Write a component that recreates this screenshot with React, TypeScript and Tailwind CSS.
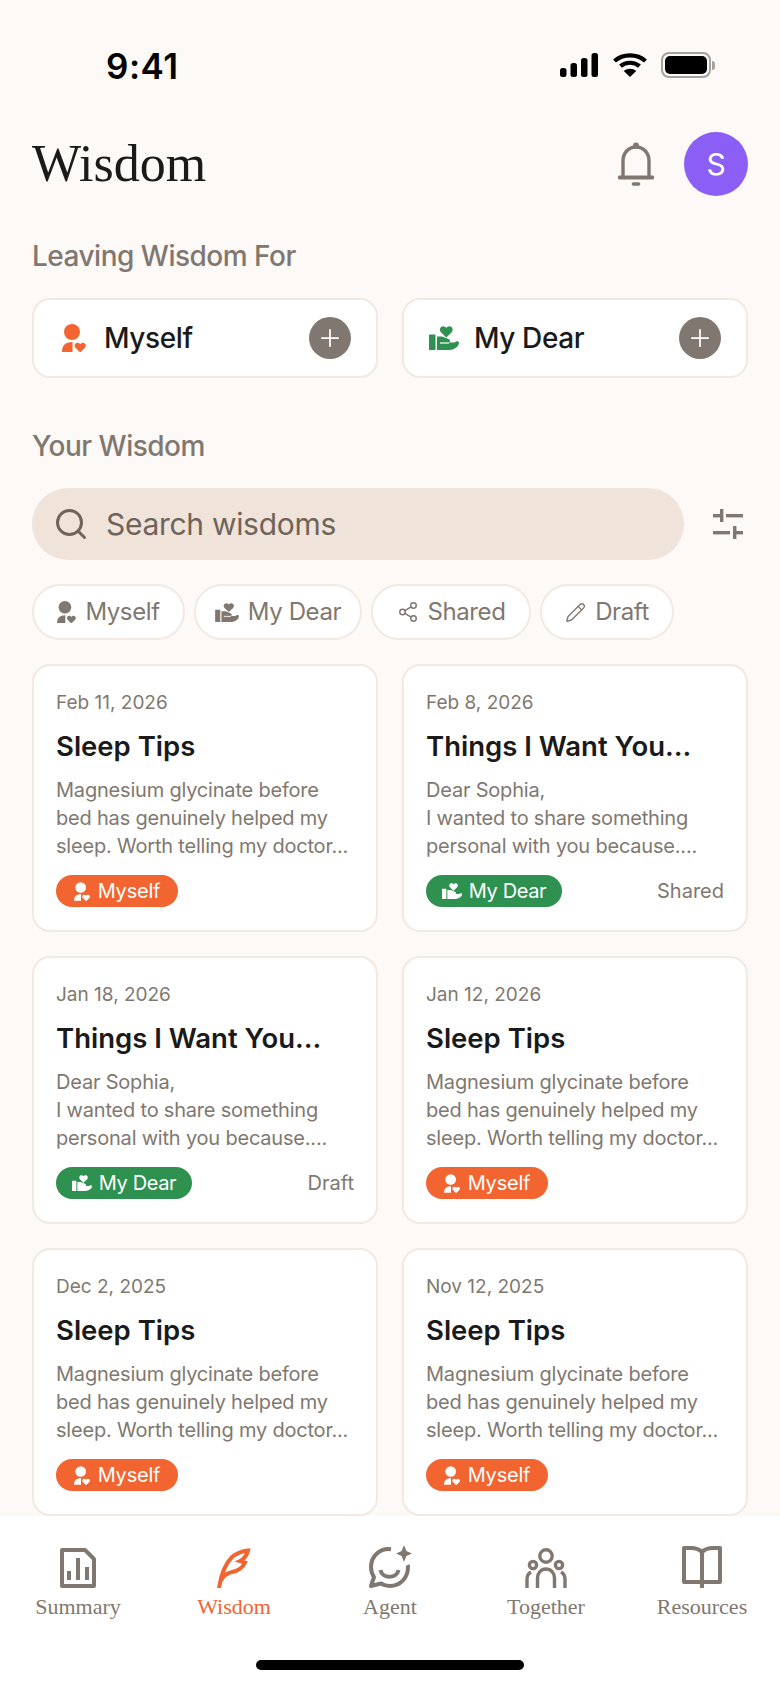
import { Pencil, Plus, Search, Share2 } from 'lucide-react';

const SANS = "font-['Inter','Noto_Sans',sans-serif]";

// colours lifted from the reference: #807870 muted, #f26430 orange, #2f9150 green

function MyselfIcon({ className }: { className: string }) {
  return (
    <svg viewBox="0 0 24 28" className={className} fill="currentColor">
      <circle cx="10" cy="8" r="8" />
      <path d="M0 28C0 21.5 3 18 10.5 18V28Z" />
      <path d="M18.2 28.5 13.4 23.8C11.6 21.8 13 18.8 15.5 18.8 16.8 18.8 17.6 19.4 18.2 20.3 18.8 19.4 19.6 18.8 20.9 18.8 23.4 18.8 24.8 21.8 23 23.8Z" />
    </svg>
  );
}

function MyDearIcon({ className }: { className: string }) {
  return (
    <svg viewBox="0 0 30 24" className={className} fill="currentColor">
      <path d="M17.3 11.5 11.9 6.2C9.8 4 11.2.3 14.2.3 15.6.3 16.6 1 17.3 2 18 1 19 .3 20.4.3 23.4.3 24.8 4 22.7 6.2Z" />
      <rect x="0" y="8.5" width="6.5" height="15.5" rx="0.5" />
      <path d="M8 10.5H13L19.5 13C21.5 13.8 21.5 16 20 16.5H25.5C27.5 14.8 30 14.8 30 17 30 20.5 25 24 20 24H8Z" />
      <rect x="11" y="16.2" width="9" height="1.6" fill="#fff" fillOpacity="0.75" />
    </svg>
  );
}

function StatusIcons() {
  return (
    <div className="flex items-center">
      <svg viewBox="0 0 39 24" className="h-[24px] w-[39px]" fill="#000">
        <rect x="0" y="15" width="6.5" height="9" rx="2.5" />
        <rect x="10.5" y="10" width="6.5" height="14" rx="2.5" />
        <rect x="21" y="5" width="6.5" height="19" rx="2.5" />
        <rect x="31.5" y="0" width="6.5" height="24" rx="2.5" />
      </svg>
      <svg viewBox="0 0 34 24" className="ml-[14px] h-[24px] w-[34px]" fill="none" stroke="#000">
        <path d="M1.5 8C9.8 .4 24.2 .4 32.5 8" strokeWidth="4.2" />
        <path d="M7.5 13.2C12.8 8.6 21.2 8.6 26.5 13.2" strokeWidth="4.2" />
        <path d="M17 24 10.8 17.9C14.2 14.9 19.8 14.9 23.2 17.9Z" fill="#000" stroke="none" />
      </svg>
      <div className="ml-[14px] flex h-[26px] w-[50px] items-center justify-center rounded-[8px] border-2 border-[#a5a19c] p-[2px]">
        <div className="h-full w-full rounded-[5px] bg-black" />
      </div>
      <div className="ml-[1px] h-[9px] w-[3px] rounded-r-full bg-[#a5a19c]" />
    </div>
  );
}

function BellIcon() {
  return (
    <svg viewBox="0 0 36 44" className="h-[44px] w-[36px]" fill="none" stroke="#807870" strokeLinecap="round">
      <circle cx="18" cy="3.5" r="3" fill="#807870" stroke="none" />
      <path d="M5 34.5V19C5 11 10.5 5 18 5S31 11 31 19V34.5" strokeWidth="3.4" />
      <path d="M1.5 35.5H34.5" strokeWidth="3.8" />
      <path d="M15.5 42H20.5" strokeWidth="3.6" />
    </svg>
  );
}

function FilterIcon() {
  return (
    <svg viewBox="0 0 30 30" className="h-[30px] w-[30px]" fill="#807870">
      <rect x="0" y="5" width="7" height="3.4" />
      <rect x="7" y="0" width="3.4" height="13" />
      <rect x="13" y="5" width="17" height="3.4" />
      <rect x="0" y="22" width="17" height="3.4" />
      <rect x="20" y="17" width="3.4" height="13" />
      <rect x="23" y="22" width="7" height="3.4" />
    </svg>
  );
}

function AddCard({ icon, label }: { icon: React.ReactNode; label: string }) {
  return (
    <div className="flex h-[80px] items-center rounded-[18px] border-2 border-[#f1e9e2] bg-white pl-[22px] pr-[25px]">
      <div className="flex w-[36px] justify-center">{icon}</div>
      <span className="ml-[12px] flex-1 text-[28px] font-medium tracking-[-0.4px] text-[#1a1a1a]">{label}</span>
      <div className="flex h-[42px] w-[42px] items-center justify-center rounded-full bg-[#807870]">
        <Plus className="h-[28px] w-[28px] text-white" strokeWidth={1.5} />
      </div>
    </div>
  );
}

function Chip({ icon, label, width }: { icon: React.ReactNode; label: string; width: string }) {
  return (
    <div className={`flex h-[56px] items-center justify-center gap-[9px] rounded-full border-2 border-[#f1e9e2] bg-white text-[24px] tracking-[-0.4px] text-[#807870] ${width}`}>
      {icon}
      <span>{label}</span>
    </div>
  );
}

function Tag({ kind }: { kind: 'myself' | 'dear' }) {
  if (kind === 'myself') {
    return (
      <div className="flex h-[32px] w-[122px] items-center justify-center gap-[8px] rounded-full bg-[#f26430] text-[20px] tracking-[-0.2px] text-white">
        <MyselfIcon className="h-[19px] w-[16px]" />
        <span>Myself</span>
      </div>
    );
  }
  return (
    <div className="flex h-[32px] w-[136px] items-center justify-center gap-[7px] rounded-full bg-[#2f9150] text-[20px] tracking-[-0.4px] text-white">
      <MyDearIcon className="h-[16px] w-[20px]" />
      <span>My Dear</span>
    </div>
  );
}

type Note = {
  date: string;
  title: string;
  body: string[];
  kind: 'myself' | 'dear';
  status?: string;
};

const SLEEP = ['Magnesium glycinate before', 'bed has genuinely helped my', 'sleep. Worth telling my doctor...'];
const THINGS = ['Dear Sophia,', 'I wanted to share something', 'personal with you because....'];

const NOTES: Note[] = [
  { date: 'Feb 11, 2026', title: 'Sleep Tips', body: SLEEP, kind: 'myself' },
  { date: 'Feb 8, 2026', title: 'Things I Want You...', body: THINGS, kind: 'dear', status: 'Shared' },
  { date: 'Jan 18, 2026', title: 'Things I Want You...', body: THINGS, kind: 'dear', status: 'Draft' },
  { date: 'Jan 12, 2026', title: 'Sleep Tips', body: SLEEP, kind: 'myself' },
  { date: 'Dec 2, 2025', title: 'Sleep Tips', body: SLEEP, kind: 'myself' },
  { date: 'Nov 12, 2025', title: 'Sleep Tips', body: SLEEP, kind: 'myself' },
];

function NoteCard({ note }: { note: Note }) {
  return (
    <div className="h-[268px] rounded-[18px] border-2 border-[#f1e9e2] bg-white px-[22px] pt-[24px]">
      <p className="text-[19px] leading-[26px] text-[#807870]">{note.date}</p>
      <p className="mt-[12px] whitespace-nowrap text-[27.5px] leading-[36px] font-semibold text-[#1a1a1a]">{note.title}</p>
      <div className="mt-[12px] text-[20px] leading-[28px] tracking-[-0.2px] whitespace-nowrap text-[#807870]">
        {note.body.map((line) => (
          <p key={line}>{line}</p>
        ))}
      </div>
      <div className="mt-[15px] flex items-center justify-between">
        <Tag kind={note.kind} />
        {note.status && <span className="text-[20px] text-[#807870]">{note.status}</span>}
      </div>
    </div>
  );
}

function NavItem({ icon, label, active }: { icon: React.ReactNode; label: string; active?: boolean }) {
  return (
    <div className={`flex flex-col items-center ${active ? 'text-[#f26430]' : 'text-[#807870]'}`}>
      <div className="flex h-[44px] items-end">{icon}</div>
      <span className="mt-[5px] font-['Liberation_Serif',serif] text-[22px] leading-[28px]">{label}</span>
    </div>
  );
}

export default function App() {
  return (
    <div className={`flex h-[1688px] w-[780px] flex-col overflow-hidden bg-[#fdf9f6] ${SANS}`}>
      {/* status bar */}
      <div className="flex h-[132px] shrink-0 justify-between pt-[44px] pl-[106px] pr-[65px]">
        <span className="text-[35px] leading-[44px] font-semibold tracking-[0.5px] text-black">9:41</span>
        <div className="pt-[8px]">
          <StatusIcons />
        </div>
      </div>

      <div className="min-h-0 flex-1 overflow-hidden px-[32px]">
        <div className="flex h-[64px] items-center justify-between">
          <h1 className="font-['Liberation_Serif',serif] text-[52px] leading-[64px] text-[#1a1a1a]">Wisdom</h1>
          <div className="flex items-center gap-[30px]">
            <BellIcon />
            <div className="flex h-[64px] w-[64px] items-center justify-center rounded-full bg-[#8b5ff5] text-[30px] text-white">S</div>
          </div>
        </div>

        <h2 className="mt-[42px] text-[28px] leading-[36px] font-medium tracking-[-0.5px] text-[#807870]">Leaving Wisdom For</h2>
        <div className="mt-[24px] grid grid-cols-2 gap-[24px]">
          <AddCard icon={<MyselfIcon className="h-[28px] w-[24px] text-[#f26430]" />} label="Myself" />
          <AddCard icon={<MyDearIcon className="h-[24px] w-[30px] text-[#2f9150]" />} label="My Dear" />
        </div>

        <h2 className="mt-[50px] text-[28px] leading-[36px] font-medium tracking-[-0.5px] text-[#807870]">Your Wisdom</h2>
        <div className="mt-[24px] flex items-center gap-[29px]">
          <div className="flex h-[72px] w-[652px] items-center rounded-full bg-[#efe3da] pl-[21px]">
            <Search className="h-[36px] w-[36px] text-[#6f6459]" strokeWidth={2} />
            <span className="ml-[17px] text-[30px] tracking-[-0.3px] text-[#6f6459]">Search wisdoms</span>
          </div>
          <FilterIcon />
        </div>

        <div className="mt-[24px] flex gap-[9px]">
          <Chip icon={<MyselfIcon className="h-[22px] w-[19px]" />} label="Myself" width="w-[153px]" />
          <Chip icon={<MyDearIcon className="h-[19px] w-[24px]" />} label="My Dear" width="w-[168px]" />
          <Chip icon={<Share2 className="h-[22px] w-[22px]" strokeWidth={1.6} />} label="Shared" width="w-[160px]" />
          <Chip icon={<Pencil className="h-[21px] w-[21px]" strokeWidth={1.6} />} label="Draft" width="w-[134px]" />
        </div>

        <div className="mt-[24px] grid grid-cols-2 gap-x-[24px] gap-y-[24px]">
          {NOTES.map((note) => (
            <NoteCard key={note.date} note={note} />
          ))}
        </div>
      </div>

      {/* bottom nav */}
      <div className="h-[172px] shrink-0 bg-white">
        <div className="grid grid-cols-5 pt-[28px]">
          <NavItem
            label="Summary"
            icon={
              <svg viewBox="0 0 36 40" className="h-[40px] w-[36px]" fill="none" stroke="currentColor" strokeWidth="4">
                <path d="M2 2H25L34 11V38H2Z" strokeLinejoin="round" />
                <path d="M9 32V23M18 32V10M27 32V19" />
              </svg>
            }
          />
          <NavItem
            label="Wisdom"
            active
            icon={
              <svg viewBox="0 0 36 40" className="h-[40px] w-[36px]" fill="none" stroke="currentColor" strokeWidth="4">
                <path d="M3 40C5 27 8 17 16 9 21 5 27 3 32 2.5 31 7 28 11 24 13L29 14.5C27 19 22 23 16 24 11 25 7 27 5 33" />
              </svg>
            }
          />
          <NavItem
            label="Agent"
            icon={
              <svg viewBox="0 0 44 43" className="h-[43px] w-[44px]" fill="none" stroke="currentColor" strokeWidth="4">
                <path d="M23 4.2C12 3 3 11 3 22 3 26 4 29 6 32L3 41 13 38.5C16 40.5 19 41 22 41 32 41 40 33 40 22 40 21 40 20.5 39.8 20" strokeLinejoin="round" />
                <path d="M12.5 25C14 34 29 34 30.5 25" />
                <path d="M36 0 38.4 6 44 8.5 38.4 11 36 17 33.6 11 28 8.5 33.6 6Z" fill="currentColor" stroke="none" />
              </svg>
            }
          />
          <NavItem
            label="Together"
            icon={
              <svg viewBox="0 0 42 40" className="h-[40px] w-[42px]" fill="none" stroke="currentColor" strokeWidth="3.4">
                <circle cx="21" cy="8" r="6.2" />
                <circle cx="8" cy="17" r="3.6" />
                <circle cx="34" cy="17" r="3.6" />
                <path d="M12.5 40V30C12.5 25 16 21 21 21S29.5 25 29.5 30V40" />
                <path d="M2 40V31C2 28 3.5 25.5 6 24" />
                <path d="M40 40V31C40 28 38.5 25.5 36 24" />
              </svg>
            }
          />
          <NavItem
            label="Resources"
            icon={
              <svg viewBox="0 0 40 42" className="h-[42px] w-[40px]" fill="none" stroke="currentColor" strokeWidth="4">
                <path d="M20 6C17 3 13 2 9 2H2V36H38V2H31C27 2 23 3 20 6Z" strokeLinejoin="round" />
                <path d="M20 6V42" />
              </svg>
            }
          />
        </div>
        <div className="mx-auto mt-[39px] h-[10px] w-[268px] rounded-full bg-black" />
      </div>
    </div>
  );
}
